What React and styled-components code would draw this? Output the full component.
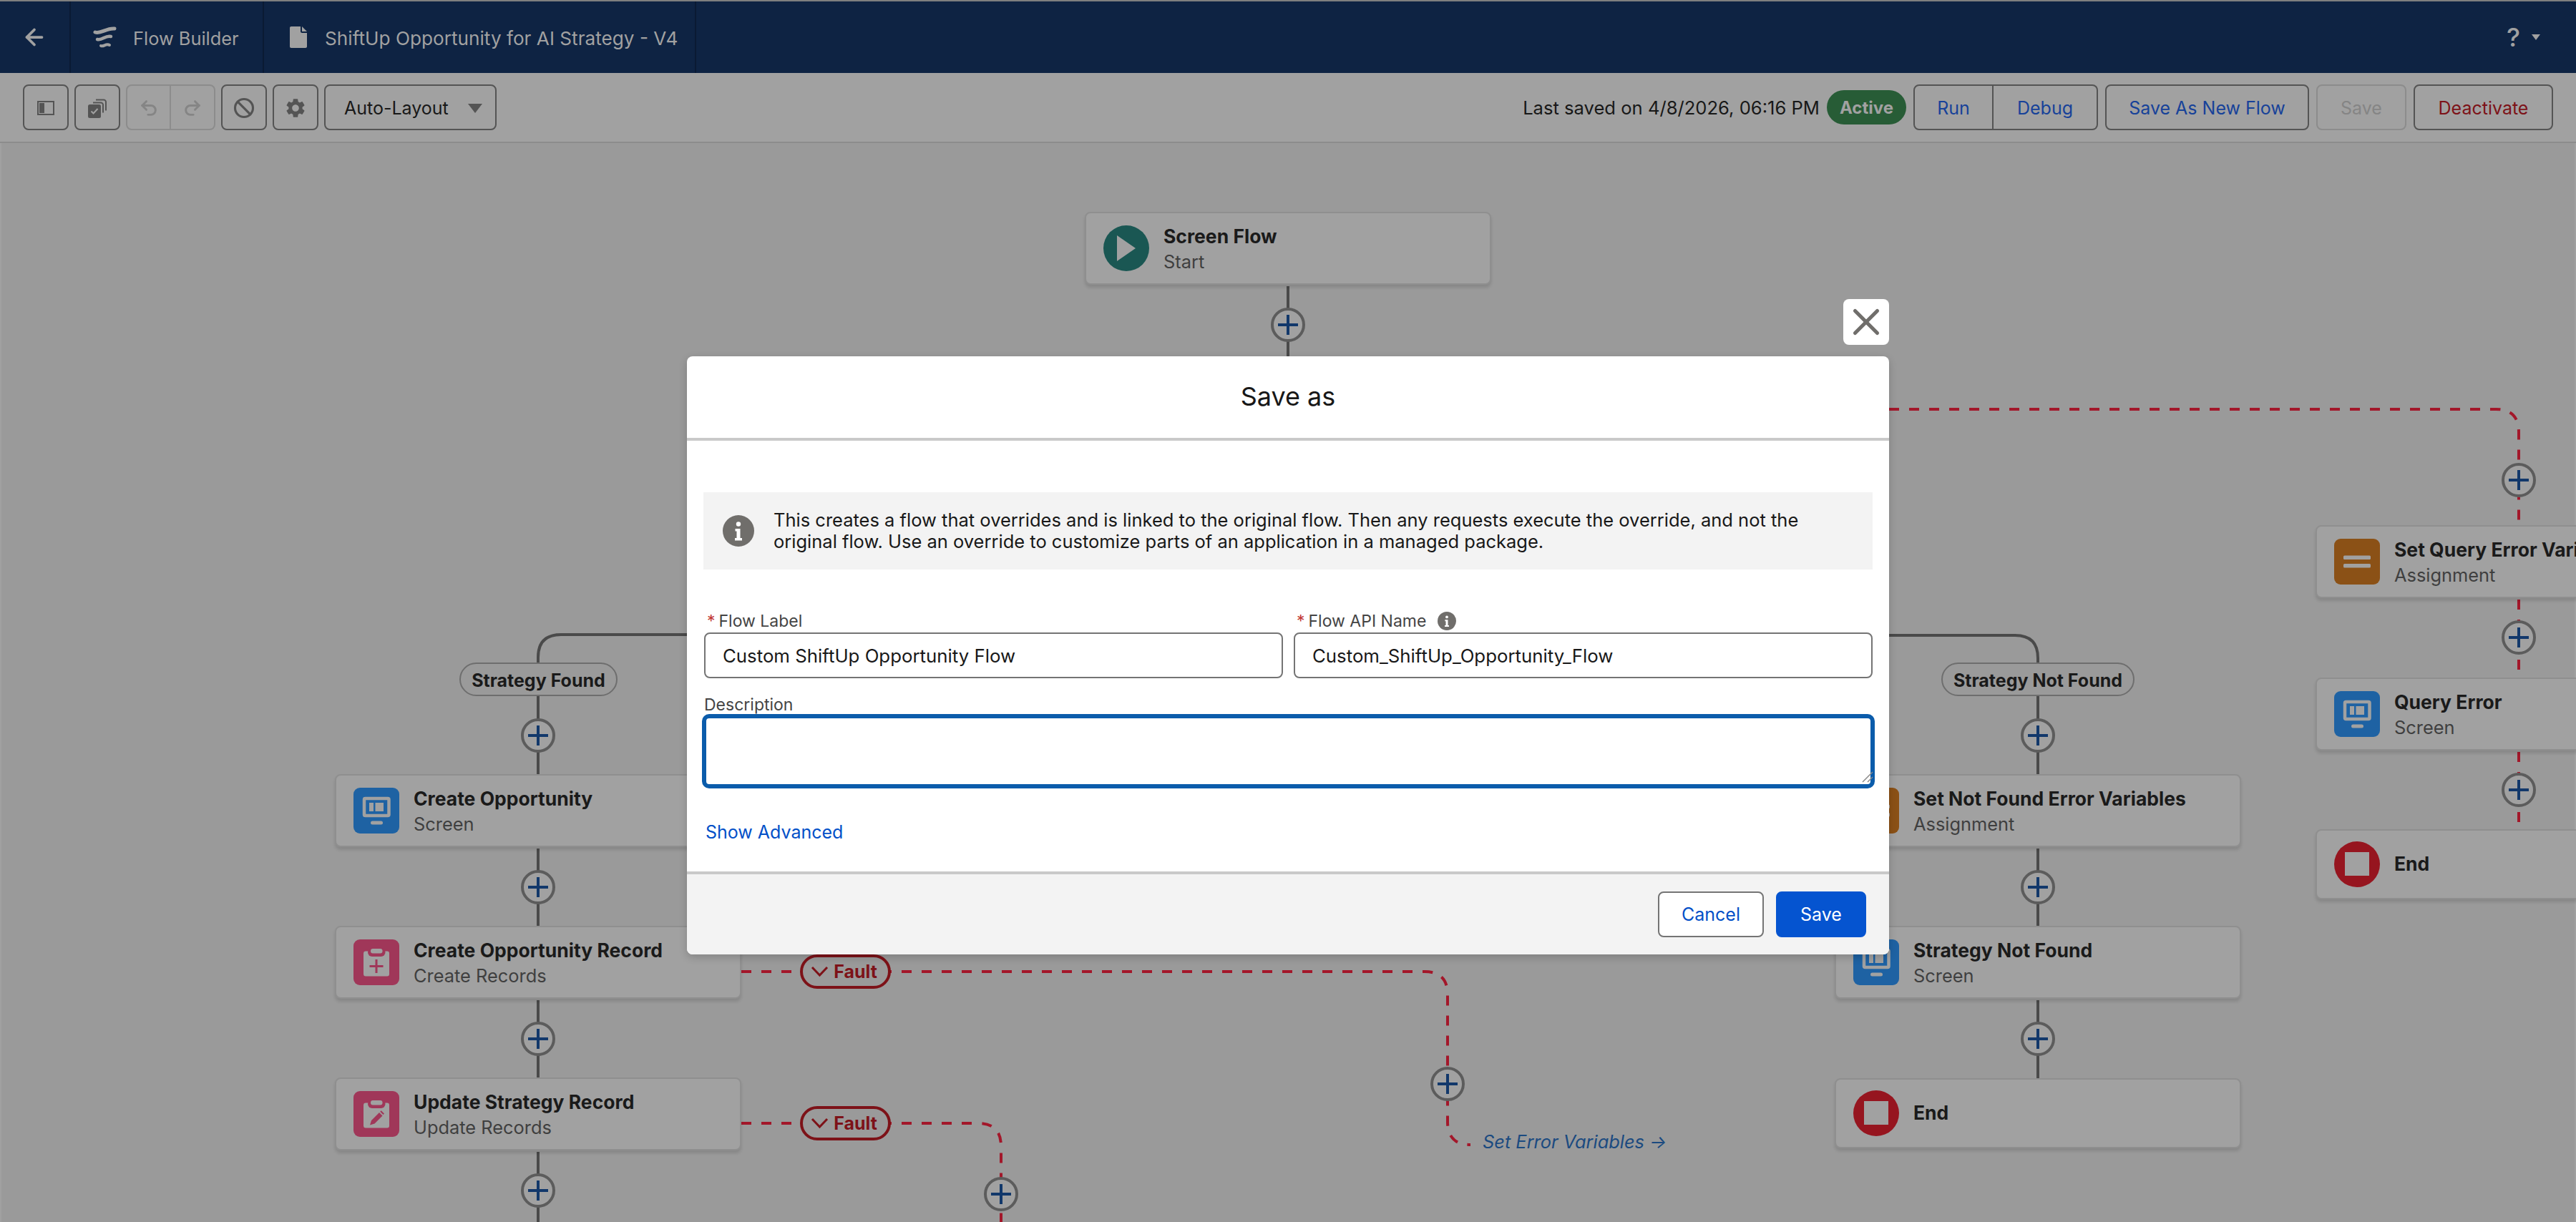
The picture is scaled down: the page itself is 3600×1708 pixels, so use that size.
import React from "react";
import styled, { createGlobalStyle } from "styled-components";
import { ArrowLeft, Undo2, Redo2, Ban, X } from "lucide-react";
import { MdSettings } from "react-icons/md";

const CANVAS_TOP = 200;

const GlobalStyle = createGlobalStyle`
  html, body {
    margin: 0;
    padding: 0;
    background: #9a9a9a;
  }
  * {
    box-sizing: border-box;
  }
  body {
    font-family: Inter, "Liberation Sans", sans-serif;
    color: #181818;
  }
`;

const Page = styled.div`
  position: relative;
  width: 3600px;
  height: 1708px;
  overflow: hidden;
  display: flex;
  flex-direction: column;
`;

/* top bar */
const Header = styled.header`
  height: 102px;
  border-top: 2px solid #7f7f7f;
  background: #0e2343;
  display: flex;
  align-items: stretch;
  color: #a1a1a1;
`;

const HeaderCell = styled.div`
  width: ${({ $w }) => $w}px;
  padding-left: ${({ $pad }) => $pad}px;
  display: flex;
  align-items: center;
  gap: ${({ $gap }) => $gap || 0}px;
  border-right: 2px solid #0a1a33;
  white-space: nowrap;
`;

const HeaderText = styled.span`
  font-size: ${({ $size }) => $size}px;
  padding-top: 2px;
`;

const HelpMenu = styled.div`
  margin-left: auto;
  padding-right: 50px;
  display: flex;
  align-items: center;
  gap: 16px;
  font-size: 36px;
  font-weight: 500;
`;

const SmallCaret = styled.span`
  width: 0;
  height: 0;
  border-left: 6px solid transparent;
  border-right: 6px solid transparent;
  border-top: 8px solid #a1a1a1;
`;

/* toolbar */
const Toolbar = styled.div`
  height: 98px;
  border-bottom: 2px solid #8c8c8c;
  background: #a1a1a1;
  padding: 16px 32px;
  display: flex;
  align-items: center;
  justify-content: space-between;
`;

const ToolGroup = styled.div`
  display: flex;
  align-items: center;
  gap: ${({ $gap }) => $gap}px;
`;

const ToolButton = styled.button`
  width: ${({ $w }) => $w || 64}px;
  height: 64px;
  padding: 2px 0 0;
  background: transparent;
  border: 2px solid ${({ disabled }) => (disabled ? "#8c8c8c" : "#545454")};
  border-radius: 8px;
  color: ${({ $color, disabled }) =>
    disabled ? "#858585" : $color || "#545454"};
  font-family: inherit;
  font-size: 25px;
  display: flex;
  align-items: center;
  justify-content: center;
`;

const Joined = styled.div`
  display: flex;

  & > button:first-child {
    border-top-right-radius: 0;
    border-bottom-right-radius: 0;
  }
  & > button:last-child {
    border-top-left-radius: 0;
    border-bottom-left-radius: 0;
    border-left: none;
  }
`;

const LayoutSelect = styled.div`
  width: 241px;
  height: 64px;
  border: 2px solid #545454;
  border-radius: 8px;
  padding: 2px 18px 0 26px;
  display: flex;
  align-items: center;
  justify-content: space-between;
  font-size: 25px;
  color: #181818;
`;

const SelectCaret = styled.span`
  width: 0;
  height: 0;
  border-left: 10px solid transparent;
  border-right: 10px solid transparent;
  border-top: 13px solid #545454;
`;

const SavedText = styled.span`
  font-size: 25.6px;
  color: #181818;
  white-space: nowrap;
`;

const ActiveBadge = styled.span`
  width: 111px;
  height: 48px;
  border-radius: 24px;
  background: #275c36;
  color: #a1a1a1;
  font-size: 24px;
  font-weight: 700;
  display: flex;
  align-items: center;
  justify-content: center;
`;

/* flow canvas */
const Canvas = styled.main`
  position: relative;
  flex: 1;
  background: #9a9a9a;
  border-left: 2px solid #a1a1a1;
  border-right: 2px solid #a1a1a1;
`;

const Wires = styled.svg`
  position: absolute;
  left: -2px;
  top: 0;
  width: 3600px;
  height: 1508px;
`;

const NodeCard = styled.div`
  position: absolute;
  left: ${({ $x }) => $x - 2}px;
  top: ${({ $y }) => $y - CANVAS_TOP}px;
  width: 568px;
  height: ${({ $h }) => $h}px;
  padding: 0 24px;
  background: #a1a1a1;
  border: 2px solid #8f8f8f;
  border-radius: 8px;
  box-shadow: 0 4px 4px rgba(0, 0, 0, 0.12);
  display: flex;
  align-items: center;
  gap: 20px;
  white-space: nowrap;
`;

const NodeIconBox = styled.svg`
  flex: none;
  width: 64px;
  height: 64px;
`;

const NodeText = styled.div`
  display: flex;
  flex-direction: column;
  gap: 6px;
  margin-top: ${({ $single }) => ($single ? -2 : 1)}px;
`;

const NodeTitle = styled.span`
  font-size: 26.5px;
  line-height: 30px;
  font-weight: 700;
  color: #1a1a1a;
`;

const NodeKind = styled.span`
  font-size: 25.4px;
  line-height: 30px;
  color: #3f3f3f;
`;

const PlusButton = styled.button`
  position: absolute;
  left: ${({ $x }) => $x - 26}px;
  top: ${({ $y }) => $y - CANVAS_TOP - 24}px;
  width: 48px;
  height: 48px;
  padding: 0;
  background: #a1a1a1;
  border: 4px solid #5c5c5c;
  border-radius: 50%;
  display: flex;
  align-items: center;
  justify-content: center;
  color: #12386b;
`;

const BranchPill = styled.div`
  position: absolute;
  left: ${({ $x }) => $x - 2}px;
  top: ${({ $y }) => $y - CANVAS_TOP}px;
  width: ${({ $w }) => $w}px;
  height: 47px;
  padding-top: 2px;
  background: #9a9a9a;
  border: 2px solid #6e6e6e;
  border-radius: 24px;
  display: flex;
  align-items: center;
  justify-content: center;
  font-size: 25px;
  font-weight: 700;
  color: #1a1a1a;
`;

const FaultPill = styled.div`
  position: absolute;
  left: ${({ $x }) => $x - 2}px;
  top: ${({ $y }) => $y - CANVAS_TOP}px;
  width: 127px;
  height: 48px;
  padding-right: 4px;
  background: #9a9a9a;
  border: 4px solid #7d1218;
  border-radius: 24px;
  display: flex;
  align-items: center;
  justify-content: center;
  gap: 7px;
  font-size: 25px;
  font-weight: 700;
  color: #7d1218;
`;

const GoToLink = styled.span`
  position: absolute;
  left: 2070px;
  top: ${1580 - CANVAS_TOP}px;
  font-size: 25.4px;
  line-height: 32px;
  font-style: italic;
  color: #1b4a80;
  white-space: nowrap;
`;

/* save as modal */
const Modal = styled.section`
  position: absolute;
  left: 960px;
  top: 498px;
  width: 1680px;
  height: 836px;
  background: #fff;
  border-radius: 8px;
  box-shadow: 0 4px 12px rgba(0, 0, 0, 0.18);
  display: flex;
  flex-direction: column;
`;

const CloseButton = styled.button`
  position: absolute;
  right: 0;
  top: -80px;
  width: 64px;
  height: 64px;
  padding: 0;
  border: none;
  border-radius: 8px;
  background: #fff;
  color: #706e6b;
  display: flex;
  align-items: center;
  justify-content: center;
`;

const ModalHeader = styled.header`
  height: 118px;
  border-bottom: 4px solid #c9c9c9;
  display: flex;
  align-items: center;
  justify-content: center;
  padding-bottom: 2px;
  font-size: 36px;
  color: #181818;
`;

const ModalBody = styled.div`
  flex: 1;
  padding: 72px 23px 0 24px;
  display: flex;
  flex-direction: column;
`;

const InfoBox = styled.div`
  height: 108px;
  margin: 0 0 0 -1px;
  padding-left: 27px;
  background: #f3f3f3;
  display: flex;
  align-items: center;
  gap: 27px;
  font-size: 25.5px;
  line-height: 30px;
  color: #181818;
`;

const InfoDot = styled.svg`
  flex: none;
  width: ${({ $size }) => $size}px;
  height: ${({ $size }) => $size}px;
  margin-left: ${({ $shift }) => $shift || 0}px;
`;

const FieldRow = styled.div`
  margin-top: 56px;
  display: grid;
  grid-template-columns: 809px 809px;
  column-gap: 15px;
`;

const Field = styled.div`
  display: flex;
  flex-direction: column;
`;

const FieldLabel = styled.label`
  height: 32px;
  padding-left: ${({ $required }) => ($required ? 4 : 0)}px;
  padding-top: ${({ $required }) => ($required ? 0 : 2)}px;
  display: flex;
  align-items: center;
  gap: 5px;
  font-size: 23px;
  color: #444;
`;

const Asterisk = styled.span`
  color: #c23934;
  font-size: 23px;
`;

const TextInput = styled.input`
  width: 100%;
  height: 64px;
  padding: 0 24px;
  border: 2px solid #747474;
  border-radius: 8px;
  font-family: inherit;
  font-size: 25.8px;
  color: #181818;
  background: #fff;
`;

const DescriptionField = styled.div`
  position: relative;
  margin-top: 20px;
`;

const TextArea = styled.textarea`
  display: block;
  width: 1639px;
  height: 104px;
  margin: -2px -3px 0;
  border: 6px solid #0b5cab;
  border-radius: 10px;
  outline: none;
  resize: none;
  background: #fff;
`;

const Resizer = styled.svg`
  position: absolute;
  right: -1px;
  bottom: 8px;
  width: 16px;
  height: 16px;
`;

const LinkButton = styled.button`
  align-self: flex-start;
  margin: 44px 0 0 2px;
  padding: 0;
  background: none;
  border: none;
  font-family: inherit;
  font-size: 25px;
  line-height: 34px;
  color: #0250c8;
`;

const ModalFooter = styled.footer`
  height: 116px;
  padding: 24px 32px 0 0;
  border-top: 4px solid #c9c9c9;
  border-radius: 0 0 8px 8px;
  background: #f3f3f3;
  display: flex;
  justify-content: flex-end;
  gap: 17px;
`;

const FooterButton = styled.button`
  width: ${({ $primary }) => ($primary ? 126 : 148)}px;
  height: 64px;
  padding: 0;
  border: 2px solid ${({ $primary }) => ($primary ? "#0554d0" : "#747474")};
  border-radius: 8px;
  background: ${({ $primary }) => ($primary ? "#0554d0" : "#fff")};
  color: ${({ $primary }) => ($primary ? "#fff" : "#0250c8")};
  font-family: inherit;
  font-size: 25px;
`;

/* drawings */
function ScreenIcon() {
  return (
    <NodeIconBox viewBox="0 0 64 64">
      <rect width="64" height="64" rx="9" fill="#1e62a3" />
      <rect x="15" y="15" width="34.5" height="24" rx="1.5" fill="none" stroke="#a1a1a1" strokeWidth="4.5" />
      <rect x="22" y="21" width="6" height="12" fill="#a1a1a1" />
      <rect x="30.5" y="21" width="11.5" height="12" fill="#a1a1a1" />
      <rect x="24" y="46.5" width="17" height="5" rx="2.5" fill="#a1a1a1" />
    </NodeIconBox>
  );
}

function Clipboard({ children }) {
  return (
    <NodeIconBox viewBox="0 0 64 64">
      <rect width="64" height="64" rx="9" fill="#a03759" />
      <rect x="14" y="16.5" width="36" height="35" rx="3" fill="#a1a1a1" />
      <rect x="20" y="12" width="24.5" height="12" rx="6" fill="#a03759" />
      <rect x="24" y="13" width="16.5" height="6.5" rx="3" fill="#a1a1a1" />
      {children}
    </NodeIconBox>
  );
}

function CreateIcon() {
  return (
    <Clipboard>
      <path d="M32 28v19M22.5 37.5h19" stroke="#a03759" strokeWidth="3" fill="none" />
    </Clipboard>
  );
}

function UpdateIcon() {
  return (
    <Clipboard>
      <path d="M23 47.5l2-6.5 11-11 4.5 4.5-11 11zM37.2 28.8l1.5-1.5 4.3 4.3-1.5 1.5z" fill="#a03759" />
    </Clipboard>
  );
}

function AssignmentIcon() {
  return (
    <NodeIconBox viewBox="0 0 64 64">
      <rect width="64" height="64" rx="9" fill="#8b5116" />
      <rect x="13" y="23.5" width="38" height="5.5" rx="1.5" fill="#a1a1a1" />
      <rect x="13" y="35" width="38" height="5.5" rx="1.5" fill="#a1a1a1" />
    </NodeIconBox>
  );
}

function EndIcon() {
  return (
    <NodeIconBox viewBox="0 0 64 64">
      <circle cx="32" cy="32" r="32" fill="#96151f" />
      <rect x="15" y="15" width="34" height="33" fill="#a1a1a1" />
    </NodeIconBox>
  );
}

function StartIcon() {
  return (
    <NodeIconBox viewBox="0 0 64 64">
      <circle cx="32" cy="32" r="32" fill="#1a5753" />
      <path d="M19 14l26 18-26 18z" fill="#a1a1a1" />
    </NodeIconBox>
  );
}

const ICONS = {
  start: StartIcon,
  screen: ScreenIcon,
  create: CreateIcon,
  update: UpdateIcon,
  assignment: AssignmentIcon,
  end: EndIcon,
};

function InfoIcon({ size, color, shift }) {
  return (
    <InfoDot $size={size} $shift={shift} viewBox="0 0 44 44">
      <circle cx="22" cy="22" r="22" fill={color} />
      <circle cx="22" cy="12.5" r="3.2" fill="#fff" />
      <path d="M17.5 19h7v13h2.5v3.5H17v-3.5h2.5v-9.5h-2z" fill="#fff" />
    </InfoDot>
  );
}

function PlusIcon() {
  return (
    <svg width="28" height="28" viewBox="0 0 28 28">
      <path d="M14 0v28M0 14h28" stroke="currentColor" strokeWidth="4" fill="none" />
    </svg>
  );
}

function FlowMark() {
  return (
    <svg width="50" height="44" viewBox="0 0 50 44" fill="none" stroke="#a1a1a1" strokeLinecap="round">
      <path d="M13 15c8 3 15-6 27-5" strokeWidth="5" />
      <path d="M16 25c7 2 11-6 19-4" strokeWidth="4.5" />
      <path d="M21 34c4 2 7-4 12-1" strokeWidth="4" />
    </svg>
  );
}

function DocMark() {
  return (
    <svg width="24" height="30" viewBox="0 0 24 30">
      <path
        d="M2 0h13v7c0 1.200 1 2 2 2h7v19c0 1.200-.8 2-2 2H2c-1.200 0-2-.8-2-2V2C0 .8.800 0 2 0zM17 0l7 7h-7z"
        fill="#a1a1a1"
      />
    </svg>
  );
}

function PanelIcon() {
  return (
    <svg width="24" height="20" viewBox="0 0 24 20">
      <rect x="1" y="1" width="22" height="18" fill="none" stroke="#545454" strokeWidth="2" />
      <rect x="3" y="3" width="7" height="14" fill="#545454" />
    </svg>
  );
}

function CopyCheckIcon() {
  return (
    <svg width="26" height="27" viewBox="0 0 26 27">
      <path d="M11 1.500h11c1.600 0 3 1.400 3 3v12" fill="none" stroke="#545454" strokeWidth="2" />
      <path d="M7 5.500h11c1.600 0 3 1.400 3 3v11" fill="none" stroke="#545454" strokeWidth="2" />
      <rect y="8" width="18" height="19" rx="2.500" fill="#545454" />
      <path d="M4.500 17.500l3 3 6-6.500" fill="none" stroke="#a1a1a1" strokeWidth="2" />
    </svg>
  );
}

function FaultChevron() {
  return (
    <svg width="25" height="16" viewBox="0 0 25 16">
      <path d="M2 2l10.500 11L23 2" fill="none" stroke="#7d1218" strokeWidth="3" />
    </svg>
  );
}

/* diagram data, in page coordinates */
const NODES = [
  { x: 1516, y: 296, icon: "start", title: "Screen Flow", kind: "Start" },
  { x: 468, y: 1082, icon: "screen", title: "Create Opportunity", kind: "Screen" },
  { x: 468, y: 1294, icon: "create", title: "Create Opportunity Record", kind: "Create Records" },
  { x: 468, y: 1506, icon: "update", title: "Update Strategy Record", kind: "Update Records" },
  { x: 2564, y: 1082, icon: "assignment", title: "Set Not Found Error Variables", kind: "Assignment" },
  { x: 2564, y: 1294, icon: "screen", title: "Strategy Not Found", kind: "Screen" },
  { x: 2564, y: 1507, icon: "end", title: "End", h: 98 },
  { x: 3236, y: 734, icon: "assignment", title: "Set Query Error Variables", kind: "Assignment" },
  { x: 3236, y: 947, icon: "screen", title: "Query Error", kind: "Screen" },
  { x: 3236, y: 1159, icon: "end", title: "End", h: 98 },
];

const PLUSES = [
  [1800, 454],
  [752, 1028],
  [752, 1240],
  [752, 1452],
  [752, 1664],
  [2848, 1028],
  [2848, 1240],
  [2848, 1452],
  [3520, 671],
  [3520, 891],
  [3520, 1104],
  [2023, 1515],
  [1399, 1669],
];

const SOLID_WIRES = [
  "M1800 400V498",
  "M960 887H784Q752 887 752 919V1082",
  "M752 1186V1294M752 1398V1506M752 1610V1708",
  "M2640 888H2816Q2848 888 2848 920V1082",
  "M2848 1186V1294M2848 1398V1507",
];

const FAULT_WIRES = [
  "M2640 572H3488Q3520 572 3520 604V734",
  "M3520 838V947M3520 1051V1159",
  "M1036 1358H1991Q2023 1358 2023 1390V1568Q2023 1600 2055 1600",
  "M1036 1570H1367Q1399 1570 1399 1602V1708",
];

export default function App() {
  return (
    <Page>
      <GlobalStyle />
      <Header>
        <HeaderCell $w={99} $pad={30}>
          <ArrowLeft size={36} strokeWidth={2.500} />
        </HeaderCell>
        <HeaderCell $w={270} $pad={21} $gap={16}>
          <FlowMark />
          <HeaderText $size={25.4}>Flow Builder</HeaderText>
        </HeaderCell>
        <HeaderCell $w={604} $pad={36} $gap={25}>
          <DocMark />
          <HeaderText $size={26.2}>ShiftUp Opportunity for AI Strategy - V4</HeaderText>
        </HeaderCell>
        <HelpMenu>
          ?
          <SmallCaret />
        </HelpMenu>
      </Header>

      <Toolbar>
        <ToolGroup $gap={8}>
          <ToolButton>
            <PanelIcon />
          </ToolButton>
          <ToolButton>
            <CopyCheckIcon />
          </ToolButton>
          <Joined>
            <ToolButton $w={63} disabled>
              <Undo2 size={28} strokeWidth={2.500} />
            </ToolButton>
            <ToolButton $w={62} disabled>
              <Redo2 size={28} strokeWidth={2.500} />
            </ToolButton>
          </Joined>
          <ToolButton>
            <Ban size={30} strokeWidth={2.500} />
          </ToolButton>
          <ToolButton>
            <MdSettings size={32} />
          </ToolButton>
          <LayoutSelect>
            Auto-Layout
            <SelectCaret />
          </LayoutSelect>
        </ToolGroup>
        <ToolGroup $gap={10}>
          <SavedText>Last saved on 4/8/2026, 06:16 PM</SavedText>
          <ActiveBadge>Active</ActiveBadge>
          <Joined>
            <ToolButton $w={112} $color="#174299">Run</ToolButton>
            <ToolButton $w={146} $color="#174299">Debug</ToolButton>
          </Joined>
          <ToolButton $w={285} $color="#174299">Save As New Flow</ToolButton>
          <ToolButton $w={126} disabled>Save</ToolButton>
          <ToolButton $w={195} $color="#7d1218">Deactivate</ToolButton>
        </ToolGroup>
      </Toolbar>

      <Canvas>
        <Wires viewBox={`0 ${CANVAS_TOP} 3600 1508`} fill="none">
          {SOLID_WIRES.map((d) => (
            <path key={d} d={d} stroke="#4a4a4a" strokeWidth="4" />
          ))}
          {FAULT_WIRES.map((d) => (
            <path key={d} d={d} stroke="#a3172a" strokeWidth="4" strokeDasharray="14 14" />
          ))}
        </Wires>

        {NODES.map((node) => {
          const Icon = ICONS[node.icon];
          return (
            <NodeCard key={`${node.x}-${node.y}`} $x={node.x} $y={node.y} $h={node.h || 102}>
              <Icon />
              <NodeText $single={!node.kind}>
                <NodeTitle>{node.title}</NodeTitle>
                {node.kind && <NodeKind>{node.kind}</NodeKind>}
              </NodeText>
            </NodeCard>
          );
        })}

        {PLUSES.map(([x, y]) => (
          <PlusButton key={`${x}-${y}`} $x={x} $y={y}>
            <PlusIcon />
          </PlusButton>
        ))}

        <BranchPill $x={642} $y={926} $w={221}>Strategy Found</BranchPill>
        <BranchPill $x={2713} $y={926} $w={270}>Strategy Not Found</BranchPill>

        <FaultPill $x={1118} $y={1334}>
          <FaultChevron />
          Fault
        </FaultPill>
        <FaultPill $x={1118} $y={1546}>
          <FaultChevron />
          Fault
        </FaultPill>

        <GoToLink>Set Error Variables →</GoToLink>
      </Canvas>

      <Modal>
        <CloseButton>
          <X size={62} strokeWidth={2} />
        </CloseButton>
        <ModalHeader>Save as</ModalHeader>
        <ModalBody>
          <InfoBox>
            <InfoIcon size={44} color="#706e6b" />
            <span>
              This creates a flow that overrides and is linked to the original flow. Then any requests execute the override, and not the
              <br />
              original flow. Use an override to customize parts of an application in a managed package.
            </span>
          </InfoBox>
          <FieldRow>
            <Field>
              <FieldLabel $required>
                <Asterisk>*</Asterisk>Flow Label
              </FieldLabel>
              <TextInput defaultValue="Custom ShiftUp Opportunity Flow" />
            </Field>
            <Field>
              <FieldLabel $required>
                <Asterisk>*</Asterisk>Flow API Name
                <InfoIcon size={26} color="#706e6b" shift={11} />
              </FieldLabel>
              <TextInput defaultValue="Custom_ShiftUp_Opportunity_Flow" />
            </Field>
          </FieldRow>
          <DescriptionField>
            <FieldLabel>Description</FieldLabel>
            <TextArea />
            <Resizer viewBox="0 0 16 16">
              <path d="M1 15L15 1M8 15l7-7" stroke="#8a8a8a" strokeWidth="1.500" />
            </Resizer>
          </DescriptionField>
          <LinkButton>Show Advanced</LinkButton>
        </ModalBody>
        <ModalFooter>
          <FooterButton>Cancel</FooterButton>
          <FooterButton $primary>Save</FooterButton>
        </ModalFooter>
      </Modal>
    </Page>
  );
}
